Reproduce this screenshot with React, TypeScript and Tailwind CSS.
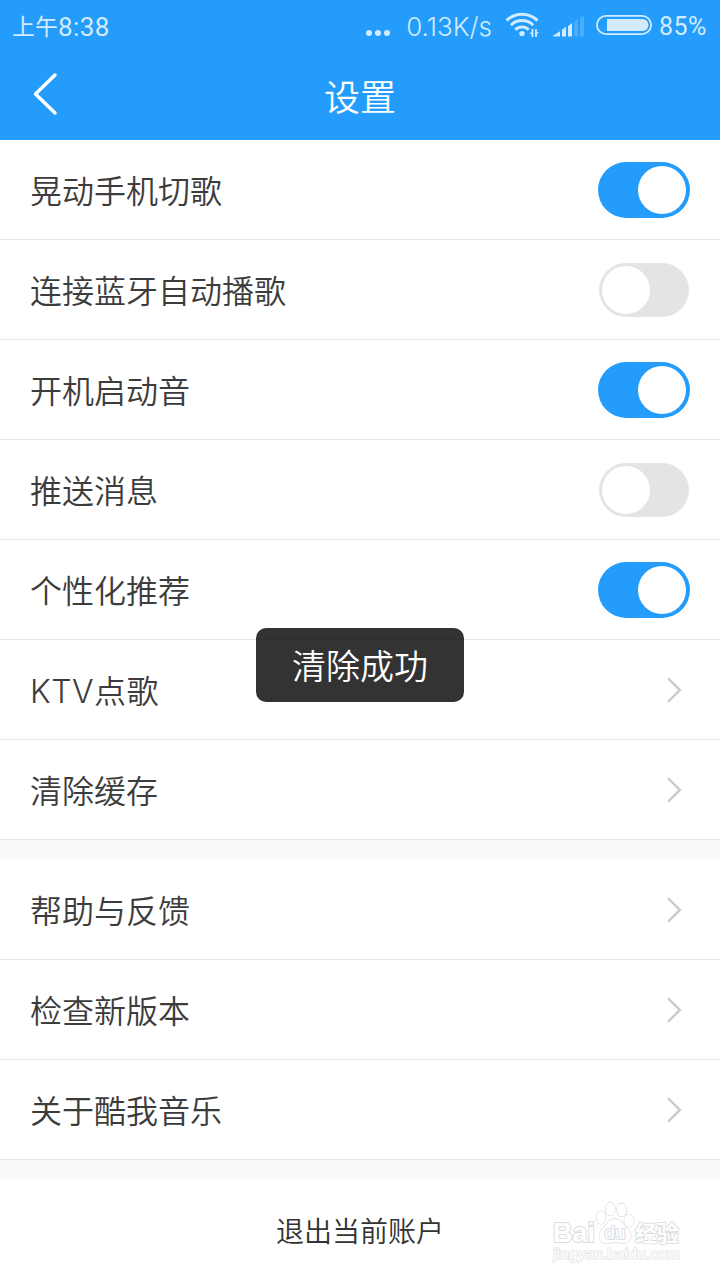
import { useState } from "react";

type SettingItem = {
  label: string;
  type: "toggle" | "link";
  on?: boolean;
  className?: string;
};

const groups: SettingItem[][] = [
  [
    { label: "晃动手机切歌", type: "toggle", on: true },
    { label: "连接蓝牙自动播歌", type: "toggle", on: false },
    { label: "开机启动音", type: "toggle", on: true },
    { label: "推送消息", type: "toggle", on: false },
    { label: "个性化推荐", type: "toggle", on: true },
    { label: "KTV点歌", type: "link", className: "tracking-[0.5px]" },
    { label: "清除缓存", type: "link" },
  ],
  [
    { label: "帮助与反馈", type: "link" },
    { label: "检查新版本", type: "link" },
    { label: "关于酷我音乐", type: "link" },
  ],
];

function WifiIcon() {
  return (
    <svg width="36" height="28" viewBox="0 0 36 28" fill="none" stroke="currentColor">
      <path d="M1.6 8.6a22 22 0 0 1 30.8 0" strokeWidth="2.9" />
      <path d="M5.9 13.2a15.6 15.6 0 0 1 22.2 0" strokeWidth="2.9" />
      <path d="M10.3 17.8a9.4 9.4 0 0 1 13.4 0" strokeWidth="2.9" />
      <circle cx="17" cy="21.6" r="2.7" fill="currentColor" stroke="none" />
      <path d="M27.5 25v-8M31 17v8" strokeWidth="1.8" />
      <path d="M24.5 21.8l3-2.8v2.8zM34 20.3l-3 2.8v-2.8z" fill="currentColor" stroke="none" />
    </svg>
  );
}

function SignalIcon() {
  return (
    <svg width="32" height="22" viewBox="0 0 32 22" fill="currentColor">
      <path d="M0 21.5v-.8l7-4.4v5.2z" />
      <path d="M9 21.5v-6.8l4-3v9.8z" />
      <path d="M15 21.5v-10.2l4-3.2v13.4z" />
      <path d="M21 21.5v-14.5l4-3v17.5z" opacity="0.22" />
      <path d="M27 21.5v-18.5l4-2.5v21z" opacity="0.22" />
    </svg>
  );
}

function BatteryIcon() {
  return (
    <svg width="56" height="20" viewBox="0 0 56 20" fill="none">
      <rect x="0.9" y="0.9" width="54.2" height="18.2" rx="9.1" stroke="currentColor" strokeWidth="1.8" />
      <path d="M11 4h35.5a6 6 0 0 1 0 12H11z" fill="currentColor" />
    </svg>
  );
}

function StatusBar() {
  return (
    <div className="flex h-[52px] items-center justify-between pl-3 pr-3 text-[26px] leading-none text-[#d3ebfe]">
      <div className="flex items-center font-['Roboto','Noto_Sans_CJK_SC',sans-serif]">
        <span className="mt-0.5 text-[23px]">上午</span>
        <span className="mt-0.5 tracking-[0.4px]">8:38</span>
      </div>
      <div className="flex items-center">
        <div className="mt-3.5 flex gap-[3px]">
          <i className="size-1.5 rounded-full bg-current" />
          <i className="size-1.5 rounded-full bg-current" />
          <i className="size-1.5 rounded-full bg-current" />
        </div>
        <span className="ml-4 mr-[13px] mt-0.5 font-[350]">0.13K/s</span>
        <WifiIcon />
        <span className="-mt-px ml-3 mr-[11px]">
          <SignalIcon />
        </span>
        <span className="-mt-0.5">
          <BatteryIcon />
        </span>
        <span className="ml-[7px] w-[49px] font-['Roboto',sans-serif] text-[25px] tracking-[0.5px]">
          85%
        </span>
      </div>
    </div>
  );
}

function Header() {
  return (
    <div className="grid h-[88px] grid-cols-[1fr_auto_1fr] items-center">
      <button className="pb-1 pl-[33px]" aria-label="返回">
        <svg width="26" height="44" viewBox="0 0 26 44" fill="none">
          <path
            d="M22 3L2.5 22L22 41"
            stroke="white"
            strokeWidth="3.5"
            strokeLinecap="round"
            strokeLinejoin="round"
          />
        </svg>
      </button>
      <h1 className="pt-1 text-[36px] font-[350] leading-none text-white">设置</h1>
    </div>
  );
}

function Toggle({ defaultOn }: { defaultOn?: boolean }) {
  const [on, setOn] = useState(!!defaultOn);

  return (
    <button
      role="switch"
      aria-checked={on}
      onClick={() => setOn((v) => !v)}
      className={`flex items-center rounded-full ${
        on
          ? "h-14 w-[92px] justify-end bg-[#239cfc] pr-1"
          : "mr-px h-[54px] w-[90px] bg-[#e4e4e4] pl-[3px]"
      }`}
    >
      <span className="size-12 rounded-full bg-white" />
    </button>
  );
}

function Chevron() {
  return (
    <svg className="mr-2" width="15" height="26" viewBox="0 0 15 26" fill="none">
      <path d="M1.8 2L12.8 13L1.8 24" stroke="#c9c9c9" strokeWidth="2.4" strokeLinecap="round" />
    </svg>
  );
}

function Row({ item }: { item: SettingItem }) {
  return (
    <div className="flex h-[100px] items-center justify-between border-b border-[#e6e6e6] bg-white px-[30px]">
      <span className={`pt-1 text-[32px] font-[350] leading-none text-[#3c3c3c] ${item.className ?? ""}`}>
        {item.label}
      </span>
      {item.type === "toggle" ? <Toggle defaultOn={item.on} /> : <Chevron />}
    </div>
  );
}

function Watermark() {
  return (
    <svg
      className="absolute bottom-3 right-9"
      width="134"
      height="68"
      viewBox="0 0 134 68"
      fill="white"
      stroke="#dcdcdc"
      strokeWidth="1.3"
      strokeLinejoin="round"
      paintOrder="stroke"
    >
      <text
        x="3"
        y="42"
        fontSize="28"
        fontWeight="700"
        fontFamily="Liberation Sans, sans-serif"
        textLength="42"
        lengthAdjust="spacingAndGlyphs"
        strokeWidth="2"
      >
        Bai
      </text>
      <ellipse cx="51" cy="17.5" rx="4.8" ry="6.4" />
      <ellipse cx="60.3" cy="9" rx="4.8" ry="6.6" />
      <ellipse cx="71.7" cy="10" rx="4.8" ry="6.6" />
      <ellipse cx="79" cy="20.7" rx="4.8" ry="6.4" />
      <path d="M65 19c5 0 7 3 9 6s7 6 7 11-4 7.500-8 7.200c-3-.2-5-.9-8-.9s-5 .7-8 .9c-4 .3-8-2.200-8-7.200s5-8 7-11 4-6 9-6z" />
      <text x="54.5" y="38.5" fontSize="19" fontFamily="Liberation Sans, sans-serif" textLength="21" strokeWidth="2">
        du
      </text>
      <text
        x="85"
        y="41"
        fontSize="22"
        fontWeight="700"
        fontFamily="Noto Sans CJK SC, sans-serif"
        textLength="44"
        strokeWidth="1.8"
      >
        经验
      </text>
      <text
        x="3"
        y="59"
        fontSize="14"
        fontFamily="Liberation Sans, sans-serif"
        textLength="127"
        lengthAdjust="spacingAndGlyphs"
        stroke="#e6e6e6"
        strokeWidth="1.6"
      >
        jingyan.baidu.com
      </text>
    </svg>
  );
}

export default function App() {
  return (
    <div className="relative h-[1280px] w-[720px] overflow-hidden bg-[#fafafa] font-['Inter','Noto_Sans_CJK_SC',sans-serif]">
      <div className="bg-[#239cfc]">
        <StatusBar />
        <Header />
      </div>

      <div className="flex flex-col gap-5">
        {groups.map((items, i) => (
          <div key={i}>
            {items.map((item) => (
              <Row key={item.label} item={item} />
            ))}
          </div>
        ))}
        <button className="h-[100px] bg-white pt-1 text-[28px] font-[350] leading-none text-[#333]">
          退出当前账户
        </button>
      </div>

      <Watermark />

      {/* Toast */}
      <div className="absolute left-64 top-[628px] flex h-[74px] w-52 items-center justify-center rounded-[10px] bg-black/80 pt-1 text-[34px] font-[350] leading-none text-white">
        清除成功
      </div>
    </div>
  );
}
